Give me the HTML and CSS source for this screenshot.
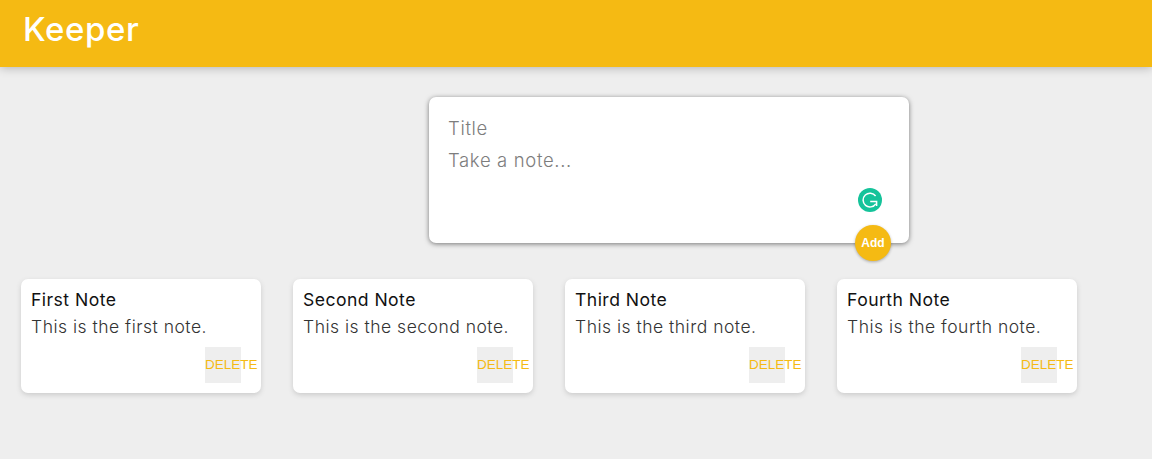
FILE: index.html
```html
<!DOCTYPE html>
<html>
	<head>
		<meta charset="UTF-8">
		<title>Keeper</title>
		<link rel="stylesheet" href="styles.css">
	</head>
	<body>
		<header class="header">
			<h1 class="logo">Keeper</h1>
		</header>
		<form class="create-note">
			<div class="field">Title</div>
			<div class="field field-body">Take a note...</div>
			<svg class="grammarly" width="24" height="24" viewBox="0 0 24 24">
				<circle cx="12" cy="12" r="12" fill="#15c39a"/>
				<path d="M17.6 8A6.9 6.9 0 1 0 17.8 15.8" fill="none" stroke="#fff" stroke-width="1.5"/>
				<path d="M12.2 13.6H18.6V18" fill="none" stroke="#fff" stroke-width="1.5"/>
			</svg>
			<button class="add" type="button">Add</button>
		</form>
		<div class="notes">
			<div class="note">
				<h2>First Note</h2>
				<p>This is the first note.</p>
				<button class="delete" type="button">DELETE</button>
			</div>
			<div class="note">
				<h2>Second Note</h2>
				<p>This is the second note.</p>
				<button class="delete" type="button">DELETE</button>
			</div>
			<div class="note">
				<h2>Third Note</h2>
				<p>This is the third note.</p>
				<button class="delete" type="button">DELETE</button>
			</div>
			<div class="note">
				<h2>Fourth Note</h2>
				<p>This is the fourth note.</p>
				<button class="delete" type="button">DELETE</button>
			</div>
		</div>
	</body>
</html>
```

FILE: styles.css
```css
* { box-sizing: border-box; }
body { margin: 0; height: 459px; overflow: hidden; background: #eee; font-family: 'Inter', 'Liberation Sans', sans-serif; }

.header { height: 67px; padding: 10px 23px 0; background: #f5ba13; box-shadow: 0 0 10px rgba(0, 0, 0, 0.3); }
.logo { margin: 0; color: #fff; font-size: 33px; line-height: 38px; font-weight: 500; letter-spacing: 0.6px; }

.create-note { position: relative; width: 480px; height: 146px; margin: 30px 0 36px 429px; padding: 19px 19px 0; background: #fff; border-radius: 7px; box-shadow: 0 1px 5px #777; }
.field { height: 32px; color: #7d7d7d; font-size: 18.5px; line-height: 25px; letter-spacing: 0.65px; font-weight: 300; }
.grammarly { position: absolute; left: 429px; top: 91px; }
.add { position: absolute; right: 18px; bottom: -18px; width: 36px; height: 36px; padding: 0; border: none; border-radius: 50%; background: #f5ba13; color: #fff; font-family: 'Liberation Sans', sans-serif; font-size: 12px; font-weight: 700; box-shadow: 0 1px 3px rgba(0, 0, 0, 0.3); }

.notes { display: flex; gap: 32px; padding-left: 21px; }
.note { position: relative; width: 240px; height: 114px; padding: 10px; background: #fff; border-radius: 7px; box-shadow: 0 2px 5px #ccc; }
.note h2 { margin: 0 0 6px; color: #111; font-size: 17.6px; line-height: 22px; font-weight: 400; letter-spacing: 0.45px; }
.note p { margin: 0; color: #333; font-size: 17.5px; line-height: 20px; font-weight: 300; letter-spacing: 0.5px; }
.delete { position: absolute; left: 184px; top: 68px; width: 36px; height: 36px; padding: 0; border: none; background: #eee; color: #f5ba13; font-family: 'Liberation Sans', sans-serif; font-size: 13.5px; line-height: 36px; text-align: left; white-space: nowrap; overflow: visible; }
```
